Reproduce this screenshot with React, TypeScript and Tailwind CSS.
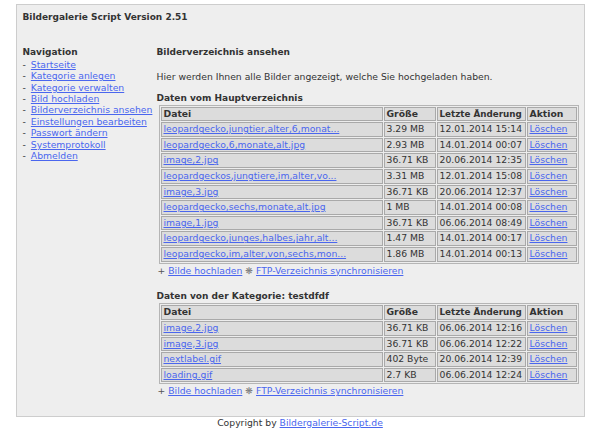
import React from "react";

interface FileRow {
  name: string;
  size: string;
  date: string;
}

const mainFiles: FileRow[] = [
  { name: "leopardgecko,jungtier,alter,6,monat...", size: "3.29 MB", date: "12.01.2014 15:14" },
  { name: "leopardgecko,6,monate,alt.jpg", size: "2.93 MB", date: "14.01.2014 00:07" },
  { name: "image,2.jpg", size: "36.71 KB", date: "20.06.2014 12:35" },
  { name: "leopardgeckos,jungtiere,im,alter,vo...", size: "3.31 MB", date: "12.01.2014 15:08" },
  { name: "image,3.jpg", size: "36.71 KB", date: "20.06.2014 12:37" },
  { name: "leopardgecko,sechs,monate,alt.jpg", size: "1 MB", date: "14.01.2014 00:08" },
  { name: "image,1.jpg", size: "36.71 KB", date: "06.06.2014 08:49" },
  { name: "leopardgecko,junges,halbes,jahr,alt...", size: "1.47 MB", date: "14.01.2014 00:17" },
  { name: "leopardgecko,im,alter,von,sechs,mon...", size: "1.86 MB", date: "14.01.2014 00:13" },
];

const categoryFiles: FileRow[] = [
  { name: "image,2.jpg", size: "36.71 KB", date: "06.06.2014 12:16" },
  { name: "image,3.jpg", size: "36.71 KB", date: "06.06.2014 12:22" },
  { name: "nextlabel.gif", size: "402 Byte", date: "20.06.2014 12:39" },
  { name: "loading.gif", size: "2.7 KB", date: "06.06.2014 12:24" },
];

const navItems = [
  "Startseite",
  "Kategorie anlegen",
  "Kategorie verwalten",
  "Bild hochladen",
  "Bilderverzeichnis ansehen",
  "Einstellungen bearbeiten",
  "Passwort ändern",
  "Systemprotokoll",
  "Abmelden",
];

const link = "text-[#4a66ee] underline underline-offset-1";
const cell =
  "border border-[#a9a9a9] bg-[#dcdcdc] px-[2px] py-0 leading-[12.6px] text-left whitespace-nowrap";

function FileTable({ rows }: { rows: FileRow[] }) {
  return (
    <table className="w-full border-separate border-spacing-[1px] border border-[#b5b5b5] bg-[#ededed]">
      <thead>
        <tr>
          <th className={`${cell} font-bold`}>Datei</th>
          <th className={`${cell} w-[52px] font-bold`}>Größe</th>
          <th className={`${cell} w-[89px] text-[8.75px] font-bold`}>Letzte Änderung</th>
          <th className={`${cell} w-[50px] font-bold`}>Aktion</th>
        </tr>
      </thead>
      <tbody>
        {rows.map((row, i) => (
          <tr key={i}>
            <td className={cell}>
              <a href="#" className={link}>{row.name}</a>
            </td>
            <td className={cell}>{row.size}</td>
            <td className={cell}>{row.date}</td>
            <td className={cell}>
              <a href="#" className={link}>Löschen</a>
            </td>
          </tr>
        ))}
      </tbody>
    </table>
  );
}

function Actions() {
  return (
    <p className="mt-px pl-px">
      <span className="text-[#555]">+</span>{" "}
      <a href="#" className={link}>Bilde hochladen</a>{" "}
      <span className="text-[#777]">❋</span>{" "}
      <a href="#" className={link}>FTP-Verzeichnis synchronisieren</a>
    </p>
  );
}

export default function App() {
  return (
    <div className="min-h-screen bg-white pt-1 font-['DejaVu_Sans',sans-serif] text-[9.25px] leading-[11.4px] text-[#333]">
      <div className="mx-auto w-[569px] border border-[#cdcdcd] bg-[#eeeeee] pb-[19px]">
        <h1 className="pl-[6px] pt-[7px] text-[9px] font-bold">Bildergalerie Script Version 2.51</h1>

        <div className="mt-[24px] flex pl-[6px] pr-[5px]">
          {/* Navigation */}
          <aside className="w-[134px] shrink-0">
            <h2 className="text-[9px] font-bold">Navigation</h2>
            <ul>
              {navItems.map((item) => (
                <li key={item}>
                  -<a href="#" className={`${link} ml-[5px]`}>{item}</a>
                </li>
              ))}
            </ul>
          </aside>

          {/* Content */}
          <main className="grow">
            <h2 className="text-[9px] font-bold">Bilderverzeichnis ansehen</h2>
            <p className="mt-[12px]">
              Hier werden Ihnen alle Bilder angezeigt, welche Sie hochgeladen haben.
            </p>

            <h3 className="mt-[11px] text-[9px] font-bold">Daten vom Hauptverzeichnis</h3>
            <div className="pl-[2px]">
              <FileTable rows={mainFiles} />
            </div>
            <Actions />

            <h3 className="mt-[15px] text-[9px] font-bold">Daten von der Kategorie: testdfdf</h3>
            <div className="mt-px pl-[2px]">
              <FileTable rows={categoryFiles} />
            </div>
            <Actions />
          </main>
        </div>
      </div>
      <p className="text-center">
        Copyright by <a href="#" className={link}>Bildergalerie-Script.de</a>
      </p>
    </div>
  );
}
